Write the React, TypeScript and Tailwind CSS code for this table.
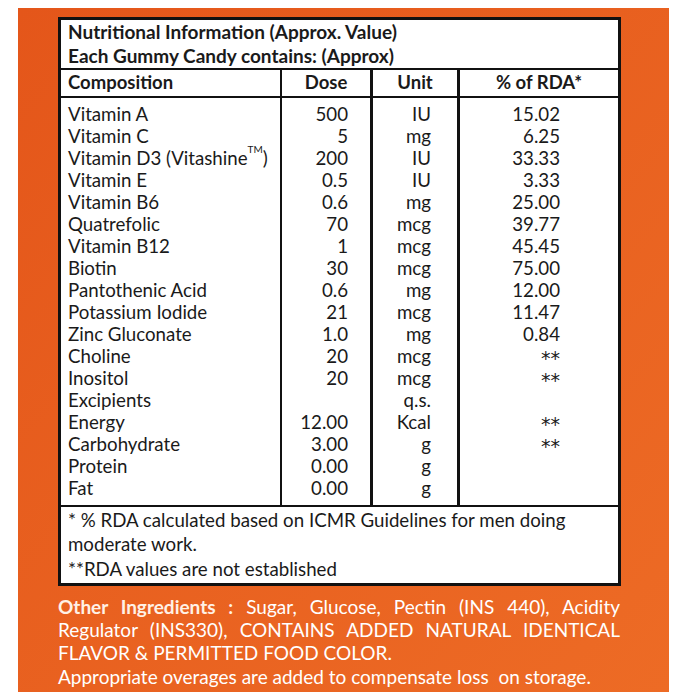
const rows: [string, string, string, string][] = [
  ["Vitamin A", "500", "IU", "15.02"],
  ["Vitamin C", "5", "mg", "6.25"],
  ["Vitamin D3 (Vitashine™)", "200", "IU", "33.33"],
  ["Vitamin E", "0.5", "IU", "3.33"],
  ["Vitamin B6", "0.6", "mg", "25.00"],
  ["Quatrefolic", "70", "mcg", "39.77"],
  ["Vitamin B12", "1", "mcg", "45.45"],
  ["Biotin", "30", "mcg", "75.00"],
  ["Pantothenic Acid", "0.6", "mg", "12.00"],
  ["Potassium Iodide", "21", "mcg", "11.47"],
  ["Zinc Gluconate", "1.0", "mg", "0.84"],
  ["Choline", "20", "mcg", "**"],
  ["Inositol", "20", "mcg", "**"],
  ["Excipients", "", "q.s.", ""],
  ["Energy", "12.00", "Kcal", "**"],
  ["Carbohydrate", "3.00", "g", "**"],
  ["Protein", "0.00", "g", ""],
  ["Fat", "0.00", "g", ""],
];

function Name({ text }: { text: string }) {
  if (text.includes("™")) {
    const [a, b] = text.split("™");
    return (
      <>
        {a}
        <sup className="text-[10px] align-[7px]">TM</sup>
        {b}
      </>
    );
  }
  return <>{text}</>;
}

function Rda({ v }: { v: string }) {
  // the stars sit on the mid line in the print, not up high
  if (v === "**")
    return (
      <span className="inline-block font-['DejaVu_Sans',sans-serif] text-[19px] leading-[14px] translate-y-[2px]">
        **
      </span>
    );
  return <>{v}</>;
}

export default function App() {
  return (
    <div className="w-[690px] h-[700px] bg-white pt-2 pl-[18px] font-['Lato',sans-serif]">
      <div className="w-[651px] h-[684px] bg-gradient-to-br from-[#e4561a] to-[#ed6b25] pt-[9px] pl-10">
        <div className="w-[563px] border-[3px] border-[#111] bg-white text-[#1a1a1a]">
          {/* title */}
          <div className="h-[50px] px-[7px] font-bold text-[19px] leading-[24px] border-b-2 border-[#111]">
            <div>Nutritional Information (Approx. Value)</div>
            <div>Each Gummy Candy contains: (Approx)</div>
          </div>

          {/* header */}
          <div className="grid grid-cols-[221px_91px_87px_1fr] h-[28px] font-bold text-[18.5px] leading-[25px] border-b-2 border-[#111]">
            <div className="pl-[7px] border-r-2 border-[#111]">Composition</div>
            <div className="text-center border-r-[3px] border-[#111]">Dose</div>
            <div className="text-center border-r-[3px] border-[#111]">Unit</div>
            <div className="text-center">% of RDA*</div>
          </div>

          {/* data */}
          <div className="grid grid-cols-[221px_91px_87px_1fr] text-[18.7px] leading-[22px] border-b-2 border-[#111]">
            <div className="pl-[7px] pt-[5px] pb-[6px] border-r-2 border-[#111]">
              {rows.map((r) => (
                <div key={r[0]} className="h-[22px] whitespace-nowrap">
                  <Name text={r[0]} />
                </div>
              ))}
            </div>
            <div className="pr-[22px] pt-[5px] text-right border-r-[3px] border-[#111]">
              {rows.map((r) => (
                <div key={r[0]} className="h-[22px]">{r[1]}</div>
              ))}
            </div>
            <div className="pr-[26px] pt-[5px] text-right border-r-[3px] border-[#111]">
              {rows.map((r) => (
                <div key={r[0]} className="h-[22px]">{r[2]}</div>
              ))}
            </div>
            <div className="pr-[58px] pt-[5px] text-right">
              {rows.map((r) => (
                <div key={r[0]} className="h-[22px]">
                  <Rda v={r[3]} />
                </div>
              ))}
            </div>
          </div>

          {/* footnotes */}
          <div className="px-[7px] pt-px pb-[2px] text-[18.7px] leading-[24.3px]">
            <p>* % RDA calculated based on ICMR Guidelines for men doing moderate work.</p>
            <p>**RDA values are not established</p>
          </div>
        </div>

        <div className="w-[562px] mt-[9px] text-white text-[19px] leading-[23.3px]">
          <p className="text-justify">
            <span className="font-bold text-[#fff1e6]">Other Ingredients :</span> Sugar, Glucose, Pectin (INS 440), Acidity Regulator (INS330), CONTAINS ADDED NATURAL IDENTICAL FLAVOR &amp; PERMITTED FOOD COLOR.
          </p>
          <p className="whitespace-nowrap">Appropriate overages are added to compensate loss&nbsp; on storage.</p>
        </div>
      </div>
    </div>
  );
}
